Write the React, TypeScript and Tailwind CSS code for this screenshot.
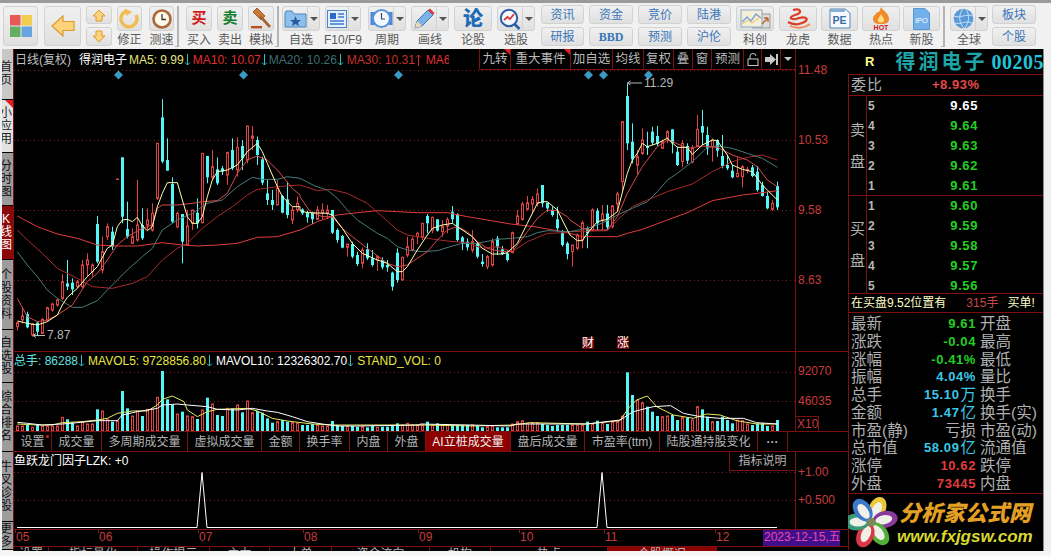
import type { ReactNode } from "react";

const RED = "#e04444";
const CYAN = "#54f6f6";

// wick top, body top, body bottom, wick bottom (3x crop y), 1 = up candle
const candles: number[][] = [
  [785, 788, 800, 812, 1], [740, 768, 780, 790, 1], [755, 762, 802, 805, 0], [790, 792, 825, 830, 1], [785, 788, 815, 825, 0],
  [775, 778, 820, 822, 1], [740, 743, 780, 785, 1], [728, 732, 750, 755, 1], [715, 720, 735, 740, 1], [642, 665, 715, 720, 1],
  [600, 670, 680, 690, 0], [655, 668, 688, 705, 0], [660, 665, 680, 685, 1], [600, 615, 680, 685, 1], [580, 600, 615, 650, 1],
  [610, 615, 635, 650, 1], [468, 492, 605, 610, 0], [530, 575, 630, 640, 1], [490, 500, 530, 540, 1], [500, 515, 560, 570, 0],
  [357, 357, 358, 358, 1], [292, 292, 470, 490, 0], [425, 507, 530, 535, 0], [505, 530, 550, 552, 1], [360, 495, 540, 545, 1],
  [445, 495, 535, 540, 0], [445, 480, 495, 510, 1], [430, 460, 510, 515, 1], [250, 250, 415, 420, 1], [118, 172, 305, 310, 0],
  [235, 300, 332, 332, 0], [352, 372, 485, 490, 0], [455, 460, 500, 505, 1], [462, 462, 545, 610, 0], [450, 498, 555, 555, 1],
  [450, 450, 490, 510, 1], [415, 458, 490, 505, 0], [280, 280, 488, 490, 1], [288, 288, 352, 370, 0], [270, 320, 352, 360, 1],
  [292, 328, 370, 375, 0], [318, 325, 335, 345, 0], [275, 278, 345, 375, 1], [235, 270, 325, 330, 0], [232, 262, 330, 350, 1],
  [240, 258, 295, 330, 0], [198, 198, 300, 310, 1], [198, 228, 235, 270, 1], [230, 240, 285, 315, 0], [290, 298, 368, 375, 0],
  [360, 400, 420, 435, 0], [390, 420, 435, 450, 0], [360, 385, 435, 435, 1], [405, 408, 458, 460, 0], [365, 418, 465, 475, 0],
  [440, 450, 480, 492, 1], [410, 430, 450, 458, 1],
  [445, 448, 460, 465, 0], [452, 458, 472, 488, 0], [455, 458, 478, 492, 0], [438, 450, 478, 480, 1], [430, 450, 458, 478, 1],
  [435, 450, 458, 478, 1], [450, 450, 518, 522, 0], [505, 510, 540, 548, 0], [525, 528, 563, 565, 0], [552, 552, 562, 590, 1],
  [545, 552, 590, 595, 0], [575, 585, 612, 618, 0], [562, 570, 610, 625, 1], [550, 568, 595, 600, 0], [570, 595, 615, 620, 0],
  [585, 590, 600, 632, 1], [592, 600, 622, 628, 0], [600, 615, 622, 635, 0], [635, 638, 680, 692, 0], [565, 578, 660, 668, 0],
  [590, 592, 660, 662, 1], [530, 560, 585, 592, 1], [530, 538, 570, 575, 1], [515, 520, 530, 552, 1], [490, 490, 530, 540, 1],
  [462, 468, 490, 520, 0], [470, 472, 510, 520, 1], [478, 478, 512, 515, 0], [480, 500, 515, 530, 1], [472, 478, 498, 520, 1],
  [438, 455, 478, 490, 0], [460, 462, 540, 545, 0], [528, 532, 552, 570, 0], [535, 545, 562, 572, 0], [510, 545, 570, 578, 1],
  [545, 550, 590, 595, 0], [582, 605, 612, 620, 0], [585, 590, 620, 628, 1], [535, 545, 615, 620, 1], [528, 535, 562, 585, 0],
  [558, 568, 582, 585, 0], [570, 580, 600, 605, 0], [515, 518, 578, 580, 1], [450, 468, 492, 495, 1], [425, 432, 478, 482, 1],
  [408, 428, 448, 452, 1], [408, 418, 432, 458, 1], [385, 402, 430, 440, 1], [375, 375, 430, 442, 0], [428, 428, 445, 455, 0],
  [440, 450, 465, 470, 0], [440, 478, 505, 515, 0], [510, 518, 555, 560, 0], [545, 550, 582, 598, 0],
  [555, 555, 575, 620, 1], [520, 525, 565, 570, 1], [482, 488, 540, 565, 1], [500, 505, 520, 565, 0], [445, 450, 510, 512, 1],
  [445, 452, 490, 510, 0], [435, 462, 480, 510, 1], [435, 460, 502, 510, 0], [435, 438, 500, 505, 1], [395, 402, 432, 455, 1],
  [185, 185, 365, 395, 1], [70, 108, 250, 270, 0], [190, 245, 298, 310, 0], [270, 290, 315, 342, 1], [205, 240, 280, 285, 1],
  [215, 258, 264, 285, 0], [200, 215, 248, 255, 0], [198, 228, 252, 258, 0], [238, 245, 265, 265, 1], [210, 215, 235, 250, 1],
  [208, 208, 250, 280, 0], [260, 275, 315, 318, 0], [240, 250, 305, 322, 1], [250, 258, 302, 312, 0], [255, 265, 305, 310, 1],
  [165, 208, 258, 262, 1], [150, 198, 218, 255, 0], [200, 225, 265, 285, 0], [235, 240, 260, 305, 1], [238, 240, 272, 290, 0],
  [225, 288, 318, 325, 0], [285, 315, 325, 330, 0], [315, 332, 352, 355, 0], [292, 340, 350, 352, 1], [315, 320, 350, 382, 1],
  [320, 328, 332, 340, 1], [315, 322, 348, 352, 0], [318, 335, 390, 395, 0], [365, 375, 408, 410, 0], [395, 408, 445, 448, 0],
  [420, 430, 448, 452, 1], [365, 378, 442, 450, 0],
];

const volumes = [
  228, 228, 225, 232, 225, 228, 228, 228, 228, 202, 208, 218, 228, 215, 222, 222, 178, 183, 208, 215, 212, 123, 175, 198, 183, 198, 178, 178, 142, 63,
  148, 165, 192, 185, 198, 200, 207, 180, 143, 162, 195, 198, 175, 175, 165, 187, 153, 188, 183, 188, 205, 218, 215, 210, 215, 218, 220,
  225, 225, 222, 225, 228, 228, 213, 225, 228, 228, 228, 230, 230, 232, 228, 232, 230, 230, 228, 220, 225, 220, 225, 225,
  225, 215, 225, 220, 225, 225, 225, 225, 225, 225, 225, 228, 232, 230, 228, 232, 232, 232, 222, 215, 212, 220, 218, 218, 222, 225, 228, 225, 225, 225,
  225, 225, 225, 215, 222, 212, 218, 222, 215, 215, 198, 67, 135, 150, 158, 170, 185, 198, 200, 198, 195, 210, 203, 203, 210, 170, 178, 200, 215, 213,
  200, 210, 220, 210, 212, 222, 225, 220, 220, 228, 228, 210,
];

const points = (flat: number[], x0: number, y0: number) => {
  const out: string[] = [];
  for (let i = 0; i < flat.length; i += 2) out.push(`${x0 + flat[i] / 3},${y0 + flat[i + 1] / 3}`);
  return out.join(" ");
};

// each line is traced from three 3x crops, at x offsets 0, 300 and 570
const maLine = (a: number[], b: number[], c: number[]) =>
  [points(a, 0, 60), points(b, 300, 60), points(c, 570, 60)].join(" ");

const maLines = [
  {
    color: "#e23c3c",
    pts: maLine(
      [52, 468, 112, 500, 172, 522, 232, 535, 292, 555, 352, 558, 412, 558, 487, 548, 547, 555, 592, 558, 652, 555, 712, 550, 772, 532, 832, 530, 900, 510],
      [0, 510, 52, 485, 112, 465, 172, 458, 232, 452, 292, 455, 352, 458, 442, 458, 502, 470, 562, 480, 632, 492, 702, 500, 772, 512, 802, 518],
      [0, 520, 37, 530, 142, 530, 172, 520, 217, 508, 292, 480, 352, 458, 427, 422, 517, 405, 562, 400, 622, 392],
    ),
  },
  {
    color: "#a82a2a",
    pts: maLine(
      [52, 510, 82, 540, 127, 580, 172, 625, 232, 655, 277, 680, 337, 685, 397, 670, 442, 650, 487, 600, 532, 565, 562, 550, 607, 505, 652, 470, 697, 440, 742, 405, 772, 388, 832, 380, 900, 375],
      [0, 375, 52, 392, 92, 388, 142, 400, 202, 430, 247, 470, 292, 510, 322, 525, 382, 535, 442, 543, 502, 548, 547, 565, 592, 560, 637, 575, 682, 545, 742, 520, 802, 518],
      [0, 515, 112, 512, 142, 480, 187, 440, 232, 420, 292, 395, 367, 372, 427, 335, 487, 305, 532, 292, 577, 285, 622, 300],
    ),
  },
  {
    color: "#4a7a7a",
    pts: maLine(
      [52, 575, 82, 615, 112, 650, 142, 690, 172, 715, 217, 742, 247, 742, 292, 722, 322, 690, 382, 630, 427, 590, 457, 565, 487, 510, 532, 480, 577, 460, 622, 430, 667, 420, 712, 380, 757, 352, 787, 358, 832, 358, 862, 350, 900, 355],
      [0, 355, 45, 378, 82, 390, 112, 415, 142, 450, 172, 480, 232, 520, 262, 535, 292, 560, 322, 570, 367, 575, 412, 572, 457, 558, 487, 550, 532, 550, 592, 538, 637, 535, 682, 530, 712, 518, 742, 512, 802, 515],
      [0, 515, 52, 505, 82, 495, 112, 482, 142, 465, 187, 445, 232, 425, 262, 395, 292, 360, 322, 340, 367, 305, 412, 262, 442, 258, 487, 265, 532, 280, 577, 295, 622, 322],
    ),
  },
  {
    color: "#d84a4a",
    pts: maLine(
      [52, 715, 82, 770, 112, 785, 142, 780, 172, 765, 217, 735, 262, 665, 292, 640, 322, 600, 352, 555, 382, 530, 427, 505, 457, 495, 472, 445, 487, 435, 532, 435, 577, 430, 607, 425, 652, 422, 682, 400, 712, 340, 742, 300, 772, 288, 802, 300, 832, 330, 877, 385, 900, 405],
      [0, 410, 30, 455, 67, 470, 97, 470, 127, 505, 157, 530, 202, 565, 262, 610, 292, 620, 322, 615, 352, 595, 382, 575, 412, 540, 442, 510, 472, 500, 502, 515, 532, 545, 562, 565, 607, 575, 637, 575, 652, 555, 682, 515, 712, 475, 742, 450, 772, 452, 802, 470],
      [0, 480, 37, 505, 67, 510, 112, 510, 142, 470, 172, 400, 217, 320, 262, 260, 292, 240, 307, 245, 352, 265, 397, 258, 442, 262, 487, 285, 532, 300, 562, 320, 592, 360, 622, 380],
    ),
  },
  {
    color: "#ffffb0",
    pts: maLine(
      [52, 783, 82, 790, 112, 795, 142, 785, 172, 765, 187, 735, 202, 712, 232, 685, 262, 650, 292, 620, 322, 565, 337, 555, 352, 500, 367, 480, 382, 478, 397, 485, 412, 472, 427, 498, 442, 512, 457, 500, 472, 440, 487, 400, 502, 368, 532, 368, 547, 420, 562, 470, 577, 490, 592, 490, 607, 470, 622, 410, 637, 360, 652, 335, 682, 330, 712, 315, 742, 275, 772, 250, 787, 275, 802, 310, 832, 380, 847, 410, 877, 440, 900, 440],
      [0, 452, 22, 458, 82, 460, 97, 465, 127, 505, 157, 550, 187, 580, 232, 600, 262, 610, 292, 635, 307, 635, 322, 620, 352, 570, 382, 525, 397, 505, 427, 495, 457, 490, 487, 510, 517, 530, 547, 565, 577, 582, 607, 582, 622, 578, 652, 550, 682, 490, 712, 430, 727, 425, 742, 425, 772, 450, 802, 510],
      [0, 525, 22, 542, 37, 542, 52, 520, 82, 485, 112, 478, 142, 455, 172, 340, 187, 300, 202, 280, 217, 250, 232, 260, 262, 250, 292, 235, 322, 262, 352, 262, 367, 283, 397, 255, 427, 240, 442, 242, 472, 285, 487, 315, 517, 328, 547, 335, 577, 375, 607, 405, 622, 420],
    ),
  },
];

const volWhite =
  points([52, 217, 82, 220, 127, 225, 187, 222, 232, 218, 292, 212, 352, 212, 367, 195, 412, 185, 472, 175, 487, 165, 532, 162, 562, 165, 622, 170, 652, 178, 712, 180, 757, 175, 802, 183, 832, 187, 877, 200, 922, 215, 967, 222, 1012, 228, 1072, 228, 1260, 225], 0, 350) +
  " " +
  points([0, 222, 150, 225, 270, 228, 290, 222, 500, 222, 600, 210, 640, 185, 700, 170, 752, 167, 790, 190, 840, 200, 900, 205, 970, 205, 1010, 218, 1072, 222], 420, 350);

const volYellow =
  points([52, 222, 112, 225, 157, 225, 187, 218, 247, 215, 292, 210, 322, 205, 352, 190, 397, 183, 442, 183, 472, 165, 487, 148, 517, 138, 552, 155, 562, 180, 592, 200, 622, 185, 652, 178, 742, 175, 772, 183, 817, 205, 862, 213, 937, 222, 1000, 225, 1260, 225], 0, 350) +
  " " +
  points([0, 225, 160, 228, 280, 225, 330, 218, 500, 222, 600, 212, 625, 175, 650, 150, 682, 138, 710, 170, 760, 195, 820, 205, 860, 192, 900, 195, 950, 212, 1010, 222, 1072, 222], 420, 350);

const leftTabs = [
  { label: "首页", cls: "h-[51px] bg-[#c8c8c8] text-[#222]" },
  { label: "小应用", cls: "h-[53px] bg-[#e2e2e2] text-[#222]", corner: true },
  { label: "分时图", cls: "h-[53px] bg-[#9c9c9c] text-[#111]" },
  { label: "K线图", cls: "h-[54px] bg-[#8c0808] text-white" },
  { label: "个股资料", cls: "h-[70px] bg-[#9c9c9c] text-[#111]" },
  { label: "自选股", cls: "h-[53px] bg-[#9c9c9c] text-[#111]" },
  { label: "综合排名", cls: "h-[69px] bg-[#9c9c9c] text-[#111]" },
  { label: "牛叉诊股", cls: "h-[70px] bg-[#9c9c9c] text-[#111]" },
  { label: "更多", cls: "h-[28px] bg-[#9c9c9c] text-[#111]" },
];

const volTabs = [
  { label: "成交量", cls: "w-[50px]" },
  { label: "多周期成交量", cls: "w-[86px]" },
  { label: "虚拟成交量", cls: "w-[74px]" },
  { label: "金额", cls: "w-[38px]" },
  { label: "换手率", cls: "w-[50px]" },
  { label: "内盘", cls: "w-[38px]" },
  { label: "外盘", cls: "w-[38px]" },
  { label: "AI立桩成交量", cls: "w-[85px] bg-[#8c0000] text-[#eee]" },
  { label: "盘后成交量", cls: "w-[74px]" },
  { label: "市盈率(ttm)", cls: "w-[75px]" },
  { label: "陆股通持股变化", cls: "w-[98px]" },
  { label: "···", cls: "w-[30px] font-bold" },
];

const chartTabs = [
  { label: "九转", cls: "w-[31px]", corner: true },
  { label: "重大事件", cls: "w-[60px]", corner: true },
  { label: "加自选", cls: "w-[42px]" },
  { label: "均线", cls: "w-[31px]" },
  { label: "复权", cls: "w-[30px]" },
  { label: "叠", cls: "w-[19px]" },
  { label: "窗", cls: "w-[19px]" },
  { label: "预测", cls: "w-[32px]" },
];

const dateLabels = [
  { label: "05", cls: "w-[83px]" },
  { label: "06", cls: "w-[100px]" },
  { label: "07", cls: "w-[105px]" },
  { label: "08", cls: "w-[115px]" },
  { label: "09", cls: "w-[101px]" },
  { label: "10", cls: "w-[85px]" },
  { label: "11", cls: "w-[111px]" },
  { label: "12", cls: "w-[48px]" },
];

const bottomTabs = [
  { label: "设置", cls: "w-[35px]" },
  { label: "指标量化", cls: "w-[89px]" },
  { label: "操作提示", cls: "w-[72px]" },
  { label: "主力", cls: "w-[60px]" },
  { label: "大单", cls: "w-[62px]" },
  { label: "资金流向", cls: "w-[98px]" },
  { label: "机构", cls: "w-[61px]" },
  { label: "热点", cls: "w-[117px]" },
  { label: "个股概况", cls: "w-[109px] bg-[#8c0000]" },
];

const stats: { left: string; value?: string; unit?: string; color: string; right: string }[] = [
  { left: "最新", value: "9.61", color: "text-[#22d022]", right: "开盘" },
  { left: "涨跌", value: "-0.04", color: "text-[#22d022]", right: "最高" },
  { left: "涨幅", value: "-0.41%", color: "text-[#22d022]", right: "最低" },
  { left: "振幅", value: "4.04%", color: "text-[#3cc8e8]", right: "量比" },
  { left: "总手", value: "15.10", unit: "万", color: "text-[#3cc8e8]", right: "换手" },
  { left: "金额", value: "1.47", unit: "亿", color: "text-[#3cc8e8]", right: "换手(实)" },
  { left: "市盈(静)", unit: "亏损", color: "text-[#b0b0b0]", right: "市盈(动)" },
  { left: "总市值", value: "58.09", unit: "亿", color: "text-[#3cc8e8]", right: "流通值" },
  { left: "涨停", value: "10.62", color: "text-[#e03c3c]", right: "跌停" },
  { left: "外盘", value: "73445", color: "text-[#e03c3c]", right: "内盘" },
];

function IconBox({ className, children }: { className: string; children: ReactNode }) {
  return (
    <div className={`flex items-center justify-center rounded-[3px] border border-[#d2d2d2] bg-gradient-to-b from-[#f0f0f0] to-[#e0e0e0] ${className}`}>
      {children}
    </div>
  );
}

function ToolButton({ className, label, caret, children }: { className: string; label: string; caret?: boolean; children: ReactNode }) {
  return (
    <div className={`flex flex-col items-center ${className}`}>
      <div className="flex h-[25px] w-full rounded-[3px] border border-[#d2d2d2] bg-gradient-to-b from-[#f0f0f0] to-[#e0e0e0]">
        <div className="flex flex-1 items-center justify-center">{children}</div>
        {caret ? (
          <div className="flex w-[12px] items-center justify-center border-l border-[#d2d2d2]">
            <div className="h-0 w-0 border-x-[4px] border-t-[4px] border-x-transparent border-t-[#555]" />
          </div>
        ) : null}
      </div>
      <div className="mt-[1px] whitespace-nowrap text-[12px] leading-[17px] text-[#5a5a5a]">{label}</div>
    </div>
  );
}

function SmallPair({ className, top, bottom }: { className: string; top: ReactNode; bottom: ReactNode }) {
  return (
    <div className={`-mt-px flex flex-col gap-[3px] text-[12px] text-[#3a76b8] ${className}`}>
      <IconBox className="h-[19px] w-full">{top}</IconBox>
      <IconBox className="h-[19px] w-full">{bottom}</IconBox>
    </div>
  );
}

function Sep({ className }: { className: string }) {
  return <div className={`h-[41px] w-[4px] border-r-2 border-b border-[#b4b4b4] ${className}`} />;
}

function Toolbar() {
  return (
    <div className="flex h-[49px] items-start border-t-[3px] border-[#9a9a9a] bg-[#f1f1f1] pt-[3px]">
      <IconBox className="ml-[3px] h-[40px] w-[35px]">
        <svg width="22" height="22" viewBox="0 0 22 22">
          <rect width="10.5" height="10.5" fill="#e85858" />
          <rect x="11.5" width="10.5" height="10.5" fill="#f0cc50" />
          <rect y="11.5" width="10.5" height="10.5" fill="#64ae64" />
          <rect x="11.5" y="11.5" width="10.5" height="10.5" fill="#68a4e0" />
        </svg>
      </IconBox>
      <IconBox className="ml-[6px] h-[40px] w-[37px]">
        <svg width="24" height="22" viewBox="0 0 24 22">
          <path d="M1 11 L12 1 V6.5 H23 V15.5 H12 V21 Z" fill="#fcd27a" stroke="#dc9a2c" strokeWidth="1.2" />
        </svg>
      </IconBox>
      <div className="ml-[5px] flex w-[26px] flex-col gap-[3px]">
        <IconBox className="h-[18px] w-full">
          <svg width="14" height="13" viewBox="0 0 14 13">
            <path d="M7 1 L13 7 H10 V12 H4 V7 H1 Z" fill="#fcd27a" stroke="#dc9a2c" />
          </svg>
        </IconBox>
        <IconBox className="h-[19px] w-full">
          <svg width="14" height="13" viewBox="0 0 14 13">
            <path d="M7 12 L13 6 H10 V1 H4 V6 H1 Z" fill="#fcd27a" stroke="#dc9a2c" />
          </svg>
        </IconBox>
      </div>
      <ToolButton className="ml-[5px] w-[25px]" label="修正">
        <svg width="21" height="21" viewBox="0 0 21 21">
          <path d="M8 3 A8 8 0 1 0 17 7" fill="none" stroke="#f2bc50" strokeWidth="3.4" />
          <path d="M6 0.5 L13 4 L7 8 Z" fill="#f2bc50" />
        </svg>
      </ToolButton>
      <ToolButton className="ml-[7px] w-[25px]" label="测速">
        <svg width="20" height="20" viewBox="0 0 20 20">
          <circle cx="10" cy="10" r="8.5" fill="#fffbe8" stroke="#a8693a" strokeWidth="2.6" />
          <path d="M10 5 V10.5 H14" fill="none" stroke="#333" strokeWidth="1.3" />
        </svg>
      </ToolButton>
      <Sep className="ml-[1px]" />
      <ToolButton className="ml-[7px] w-[26px]" label="买入">
        <span className="text-[15px] font-bold text-[#d01818]">买</span>
      </ToolButton>
      <ToolButton className="ml-[5px] w-[26px]" label="卖出">
        <span className="text-[15px] font-bold text-[#0d7d2a]">卖</span>
      </ToolButton>
      <ToolButton className="ml-[5px] w-[26px]" label="模拟">
        <svg width="22" height="23" viewBox="0 0 22 23">
          <path d="M7 1 L15 9 L11 13 L3 5 Z" fill="#c87a3a" stroke="#8a4a1c" strokeWidth="0.8" />
          <path d="M11 8 L21 19 L19 21 L9 10 Z" fill="#a86430" />
          <rect x="1" y="19" width="11" height="2.4" fill="#b85020" />
        </svg>
      </ToolButton>
      <Sep className="ml-[1px]" />
      <ToolButton className="ml-[3px] w-[38px]" label="自选" caret>
        <svg width="23" height="20" viewBox="0 0 23 20">
          <path d="M1 4 V18 H22 V5 H10 L8 2 H2 Z" fill="#8ec0ec" stroke="#4a86c0" />
          <path d="M11.5 7 L13 11 L17 11 L14 13.5 L15 17 L11.5 15 L8 17 L9 13.5 L6 11 L10 11 Z" fill="#2a5aa0" />
        </svg>
      </ToolButton>
      <ToolButton className="ml-[5px] w-[36px]" label="F10/F9" caret>
        <svg width="20" height="18" viewBox="0 0 20 18">
          <rect x="0.5" y="0.5" width="19" height="17" fill="#e6f0fc" stroke="#4a86c8" />
          <rect x="3" y="3" width="6" height="6" fill="#2a6ac8" />
          <path d="M3 11 H17 M3 14 H17 M11 4 H17 M11 7 H17" stroke="#3a7ad0" strokeWidth="1.4" />
        </svg>
      </ToolButton>
      <ToolButton className="ml-[7px] w-[38px]" label="周期" caret>
        <svg width="23" height="21" viewBox="0 0 23 21">
          <rect x="0.5" y="4" width="4" height="13" fill="#4a86d8" />
          <rect x="18.5" y="4" width="4" height="13" fill="#4a86d8" />
          <circle cx="11.5" cy="10.5" r="8.5" fill="#f4f8ff" stroke="#5a94d8" strokeWidth="2" />
          <path d="M11.5 5 V11 H15" fill="none" stroke="#3a4a6a" strokeWidth="1.2" />
        </svg>
      </ToolButton>
      <ToolButton className="ml-[5px] w-[38px]" label="画线" caret>
        <svg width="21" height="21" viewBox="0 0 21 21">
          <path d="M1 20 L3 13 L14 2 L19 7 L8 18 Z" fill="#7cb2e8" stroke="#3c78b8" />
          <path d="M14 2 L16 0.5 L20.5 5 L19 7 Z" fill="#d83a3a" />
          <path d="M1 20 L3 13 L8 18 Z" fill="#f4dcb0" />
        </svg>
      </ToolButton>
      <ToolButton className="ml-[5px] w-[38px]" label="论股">
        <span className="text-[20px] font-black leading-none text-[#1f6ab4]">论</span>
      </ToolButton>
      <ToolButton className="ml-[5px] w-[38px]" label="选股" caret>
        <svg width="22" height="22" viewBox="0 0 22 22">
          <circle cx="10" cy="10" r="8.2" fill="#f4f8fc" stroke="#2a5ea8" strokeWidth="2" />
          <path d="M15.5 16 L20.5 21" stroke="#2a5ea8" strokeWidth="2.6" />
          <path d="M5 12 L8.5 9 L11 11 L15 6" fill="none" stroke="#d83a3a" strokeWidth="1.8" />
        </svg>
      </ToolButton>
      <SmallPair className="ml-[6px] w-[43px]" top="资讯" bottom="研报" />
      <SmallPair className="ml-[5px] w-[44px]" top="资金" bottom={<span className="font-['Liberation_Serif',serif] font-bold">BBD</span>} />
      <SmallPair className="ml-[5px] w-[44px]" top="竞价" bottom="预测" />
      <SmallPair className="ml-[5px] w-[44px]" top="陆港" bottom="沪伦" />
      <ToolButton className="ml-[5px] w-[38px]" label="科创">
        <svg width="31" height="20" viewBox="0 0 31 20">
          <rect x="13" y="5" width="17" height="14" fill="#dcdcdc" stroke="#999" />
          <rect x="1" y="1" width="21" height="17" fill="#f4f0d8" stroke="#8aa8c8" />
          <path d="M2 13 L7 8 L11 12 L16 5 L21 9" fill="none" stroke="#7aa4d8" strokeWidth="1.4" />
          <path d="M2 15 L8 11 L12 14 L20 8" fill="none" stroke="#e8b860" />
          <path d="M22 15 L28 9 M28 9 H24 M28 9 V13" fill="none" stroke="#b8662a" strokeWidth="1.4" />
        </svg>
      </ToolButton>
      <ToolButton className="ml-[5px] w-[38px]" label="龙虎">
        <svg width="26" height="22" viewBox="0 0 26 22">
          <path d="M8 2 C16 0 18 5 10 7 C3 9 5 13 14 10 C22 8 25 12 17 15 C12 17 8 17 3 14" fill="none" stroke="#dc3c24" strokeWidth="2.2" />
          <path d="M5 18 C12 21 20 20 25 16" fill="none" stroke="#ec8a5a" strokeWidth="1.8" />
        </svg>
      </ToolButton>
      <ToolButton className="ml-[4px] w-[37px]" label="数据">
        <svg width="22" height="21" viewBox="0 0 22 21">
          <path d="M1 1 H16 L21 5 V20 H1 Z" fill="#f6f9fd" stroke="#5a86b4" />
          <rect x="1" y="1" width="15" height="3" fill="#8aaed4" />
          <text x="3.5" y="15.5" fontSize="10.5" fontWeight="700" fill="#3a6ea8" fontFamily="Liberation Sans">PE</text>
        </svg>
      </ToolButton>
      <ToolButton className="ml-[4px] w-[38px]" label="热点">
        <svg width="22" height="23" viewBox="0 0 22 23">
          <path d="M11 0 C13 4 19 6 19 12 C19 15 17 17 11 17 C5 17 3 15 3 12 C3 8 6 8 7 5 C9 6 10 4 11 0 Z" fill="#f08a2a" />
          <path d="M11 7 C12 10 15 11 14 14 C13 16 9 16 8 14 C7 12 10 10 11 7 Z" fill="#ffe080" />
          <text x="11" y="22.5" textAnchor="middle" fontSize="7" fontWeight="700" fill="#d02020" fontFamily="Liberation Sans">HOT</text>
        </svg>
      </ToolButton>
      <ToolButton className="ml-[3px] w-[37px]" label="新股">
        <svg width="17" height="22" viewBox="0 0 17 22">
          <path d="M0.5 0.5 H12 L16.5 5 V21.5 H0.5 Z" fill="#72b0ec" stroke="#5a96d4" />
          <text x="8.5" y="14.5" textAnchor="middle" fontSize="7.5" fill="#fff" fontFamily="Liberation Sans">IPO</text>
        </svg>
      </ToolButton>
      <Sep className="ml-[1px]" />
      <ToolButton className="ml-[5px] w-[38px]" label="全球" caret>
        <svg width="21" height="21" viewBox="0 0 21 21">
          <circle cx="10.5" cy="10.5" r="9.8" fill="#5a9ad8" />
          <path d="M1 8 C6 11 14 5 20 8 M2 15 C7 17 14 12 19 15 M10 1 C5 7 6 15 11 20 M13 1 C17 7 16 15 12 20" fill="none" stroke="#cfe4f8" strokeWidth="0.9" />
        </svg>
      </ToolButton>
      <SmallPair className="ml-[4px] w-[44px]" top="板块" bottom="个股" />
    </div>
  );
}

function TrendArrow({ up, color }: { up?: boolean; color: string }) {
  return (
    <svg width="7" height="12" viewBox="0 0 7 12" className="inline-block align-[-2px]">
      <path d={up ? "M3.5 12 V1 M1 3.5 L3.5 1 L6 3.5" : "M3.5 0 V11 M1 8.5 L3.5 11 L6 8.5"} fill="none" stroke={color} />
    </svg>
  );
}

function DottedGrid({ ys }: { ys: number[] }) {
  return (
    <>
      {ys.map((y) => (
        <line key={y} x1="14" x2="795" y1={y + 0.5} y2={y + 0.5} stroke="#8a1c1c" strokeDasharray="1 3" />
      ))}
    </>
  );
}

function MainChart() {
  return (
    <svg width="781" height="281" viewBox="14 70 781 281" className="block">
      <DottedGrid ys={[70, 140, 210, 280]} />
      {[118.5, 243.5, 398.5, 588.5, 603.5, 648.5].map((x) => (
        <path key={x} d={`M${x} 70.5 L${x + 4.5} 75 L${x} 79.5 L${x - 4.5} 75 Z`} fill="#3a9ac4" />
      ))}
      {candles.map((c, i) => {
        const x = 17.5 + i * 5;
        const [wickTop, bodyTop, bodyBottom, wickBottom] = c.slice(0, 4).map((v) => 60 + v / 3);
        const up = c[4] === 1;
        return (
          <g key={i}>
            <line x1={x} x2={x} y1={wickTop} y2={wickBottom} stroke={up ? RED : CYAN} />
            {up ? (
              <rect x={x - 1} y={bodyTop} width="2" height={Math.max(bodyBottom - bodyTop, 0.5)} fill="#000" stroke={RED} />
            ) : (
              <rect x={x - 1.5} y={bodyTop} width="3" height={bodyBottom - bodyTop} fill={CYAN} />
            )}
          </g>
        );
      })}
      {maLines.map((m) => (
        <polyline key={m.color} points={m.pts} fill="none" stroke={m.color} strokeWidth="1" />
      ))}
      <path d="M627.5 83 H642 M627.5 83 L630.5 81 M627.5 83 L630.5 85" fill="none" stroke="#b8b8b8" />
      <path d="M33 335.5 H45 M33 335.5 L36 333.5 M33 335.5 L36 337.5" fill="none" stroke="#b8b8b8" />
    </svg>
  );
}

function VolumeChart() {
  return (
    <svg width="781" height="79" viewBox="14 352 781 79" className="block">
      <DottedGrid ys={[372, 401]} />
      {volumes.map((v, i) => {
        const x = 17.5 + i * 5;
        const top = 350 + v / 3;
        return candles[i][4] === 1 ? (
          <rect key={i} x={x - 1} y={top} width="2" height={431 - top} fill="#000" stroke={RED} />
        ) : (
          <rect key={i} x={x - 1.5} y={top} width="3" height={431 - top} fill={CYAN} />
        );
      })}
      <polyline points={volYellow} fill="none" stroke="#e8e860" />
      <polyline points={volWhite} fill="none" stroke="#fff" />
    </svg>
  );
}

function FactorChart() {
  return (
    <svg width="781" height="77" viewBox="14 452 781 77" className="block">
      <DottedGrid ys={[472, 500]} />
      <polyline points="17,527.5 197,527.5 202,472.5 207,527.5 597,527.5 602,472.5 607,527.5 777,527.5" fill="none" stroke="#fff" />
    </svg>
  );
}

function CenterColumn() {
  return (
    <div className="w-[835px] border-l border-[#7c1010] text-[12px]">
      <div className="flex h-[303px] border-b border-[#7c1010]">
        <div className="relative w-[781px]">
          <div className="flex h-[21px] items-center">
            <div className="flex w-[435px] items-center overflow-hidden whitespace-nowrap pl-[1px]">
              <span className="text-[#c0c0c0]">日线(复权)</span>
              <span className="ml-[8px] text-white">得润电子</span>
              <span className="ml-[2px] text-[#e4e480]">MA5: 9.99</span>
              <span className="mr-[2px]"><TrendArrow color="#30c0c0" /></span>
              <span className="text-[#e03030]">MA10: 10.07</span>
              <span className="mr-[1px]"><TrendArrow color="#30c0c0" /></span>
              <span className="text-[#3e6e74]">MA20: 10.26</span>
              <span className="mr-[3px]"><TrendArrow color="#30c0c0" /></span>
              <span className="text-[#c83030]">MA30: 10.31</span>
              <span className="mr-[4px]"><TrendArrow up color="#c83030" /></span>
              <span className="text-[#e03030]">MA60: 9.80</span>
            </div>
            <div className="ml-[30px] flex h-[21px] border-b border-l border-[#7c1010] text-[12.5px] text-[#b8b8b8]">
              {chartTabs.map((t) => (
                <div key={t.label} className={`relative flex items-center justify-center border-r border-[#7c1010] ${t.cls}`}>
                  {t.label}
                  {t.corner ? <div className="absolute right-0 top-0 h-0 w-0 border-l-[6px] border-t-[6px] border-l-transparent border-t-[#e02020]" /> : null}
                </div>
              ))}
              <div className="flex w-[18px] items-center justify-center border-r border-[#7c1010]">
                <svg width="12" height="13" viewBox="0 0 12 13">
                  <rect x="1" y="6" width="10" height="6.5" fill="none" stroke="#c8c8c8" />
                  <path d="M3 6 V3 A3 2.5 0 0 1 9 3" fill="none" stroke="#c8c8c8" />
                </svg>
              </div>
              <div className="flex w-[19px] items-center justify-center border-r border-[#7c1010]">
                <svg width="13" height="11" viewBox="0 0 13 11">
                  <path d="M0 3 H5 V0 L11 5.5 L5 11 V8 H0 Z" fill="#c8c8c8" />
                  <rect x="11" y="0" width="2" height="11" fill="#c8c8c8" />
                </svg>
              </div>
              <div className="flex w-[14px] items-center justify-center">
                <div className="h-0 w-0 border-x-[4px] border-t-[4px] border-x-transparent border-t-[#c8c8c8]" />
              </div>
            </div>
          </div>
          <MainChart />
          <span className="absolute left-[33px] top-[278px] leading-[16px] text-[#b8b8b8]">7.87</span>
          <span className="absolute left-[630px] top-[26px] leading-[16px] text-[#b8b8b8]">11.29</span>
          <span className="absolute left-[568px] top-[288px] flex h-[12px] w-[12px] items-center justify-center bg-[#6c0808] text-[12px] text-white">财</span>
          <span className="absolute left-[603px] top-[288px] flex h-[12px] w-[12px] items-center justify-center bg-[#6c0808] text-[12px] text-white">涨</span>
        </div>
        <div className="flex w-[53px] flex-col gap-[54px] border-l border-[#7c1010] pl-[2px] pt-[13px] leading-[16px] text-[#c83c3c]">
          <span>11.48</span>
          <span>10.53</span>
          <span>9.58</span>
          <span>8.63</span>
        </div>
      </div>

      <div className="flex h-[80px] border-b border-[#7c1010]">
        <div className="relative w-[781px]">
          <VolumeChart />
          <div className="absolute left-0 top-[1px] whitespace-nowrap leading-[16px]">
            <span className="text-[#60e0e0]">总手: 86288</span>
            <TrendArrow color="#30c0c0" />
            <span className="ml-[3px] text-[#e8e840]">MAVOL5: 9728856.80</span>
            <TrendArrow color="#30c0c0" />
            <span className="ml-[3px] text-white">MAVOL10: 12326302.70</span>
            <TrendArrow color="#30c0c0" />
            <span className="ml-[3px] text-[#e8e840]">STAND_VOL: 0</span>
          </div>
        </div>
        <div className="w-[53px] border-l border-[#7c1010] leading-[16px] text-[#c83c3c]">
          <div className="flex flex-col gap-[14px] pl-[2px] pt-[11px]">
            <span>92070</span>
            <span>46035</span>
          </div>
          <div className="mt-[7px] h-[15px] w-[23px] overflow-hidden border-r border-t border-[#7c1010] pl-[1px] leading-[14px]">X10</div>
        </div>
      </div>

      <div className="flex h-[20px] border-b border-[#7c1010] text-[#b4b4b4]">
        <div className="relative flex w-[38px] items-center justify-center border-r border-[#7c1010]">
          设置
          <div className="absolute right-[2px] top-[3px] h-[3px] w-[3px] rounded-full bg-[#e02020]" />
        </div>
        {volTabs.map((t) => (
          <div key={t.label} className={`flex items-center justify-center whitespace-nowrap border-r border-[#7c1010] ${t.cls}`}>
            {t.label}
          </div>
        ))}
      </div>

      <div className="flex h-[78px] border-b border-[#7c1010]">
        <div className="relative w-[781px]">
          <FactorChart />
          <div className="absolute left-0 top-[1px] leading-[16px] text-white">鱼跃龙门因子LZK: +0</div>
          <div className="absolute right-0 top-0 flex h-[19px] w-[66px] items-center justify-center border-b border-l border-[#7c1010] text-[#b4b4b4]">指标说明</div>
        </div>
        <div className="flex w-[53px] flex-col gap-[12px] border-l border-[#7c1010] pl-[2px] pt-[12px] leading-[16px] text-[#c83c3c]">
          <span>+1.00</span>
          <span>+0.500</span>
        </div>
      </div>

      <div className="flex h-[17px] border-b border-[#7c1010] leading-[15px] text-[#c83c3c]">
        <div className="w-[1px]" />
        {dateLabels.map((d) => (
          <div key={d.label} className={`relative pl-[1px] ${d.cls}`}>
            <div className="absolute left-0 top-0 h-[3px] w-px bg-[#8a1c1c]" />
            {d.label}
          </div>
        ))}
        <div className="w-[77px] overflow-hidden whitespace-nowrap bg-[#40108c] pl-[1px] text-[#e84aa8]">2023-12-15,五</div>
      </div>

      <div className="flex h-[4px] overflow-hidden leading-[15px] text-[#b4b4b4]">
        {bottomTabs.map((t) => (
          <div key={t.label} className={`flex shrink-0 justify-center whitespace-nowrap border-r border-[#7c1010] ${t.cls}`}>
            {t.label}
          </div>
        ))}
      </div>
    </div>
  );
}

function QuoteRow({ n, price, color }: { n: number; price: string; color: string }) {
  return (
    <div className="flex h-[20px] w-[111px] items-center justify-between pl-[1px]">
      <span className="text-[12px] font-bold text-[#b8b8b8]">{n}</span>
      <span className={`text-[13px] font-bold tracking-[0.6px] ${color}`}>{price}</span>
    </div>
  );
}

function SideLabel({ chars, gap }: { chars: string[]; gap: string }) {
  return (
    <div className={`flex w-[18px] flex-col items-center justify-center border-r border-[#7c1010] text-[15px] leading-[17px] text-[#b0b0b0] ${gap}`}>
      {chars.map((c) => (
        <span key={c}>{c}</span>
      ))}
    </div>
  );
}

function Flower() {
  const petals = [
    { a: 25, c: "#e8c838" },
    { a: 80, c: "#8a3a9a" },
    { a: 145, c: "#52b038" },
    { a: 203, c: "#d83848" },
    { a: 270, c: "#3a9a78" },
    { a: 325, c: "#3a7ac8" },
  ];
  return (
    <svg width="56" height="56" viewBox="-28 -28 56 56" className="absolute -left-[6px] top-0">
      {petals.map((p) => (
        <g key={p.a} transform={`rotate(${p.a})`}>
          <ellipse cx="0" cy="-14.5" rx="8.5" ry="12.5" fill={p.c} />
          <ellipse cx="0" cy="-13" rx="4.5" ry="8.5" fill="#f0f0e8" />
        </g>
      ))}
      <circle r="4" fill="#7a8a58" />
    </svg>
  );
}

function RightPanel() {
  return (
    <div className="w-[195px] overflow-hidden bg-black">
      <div className="flex h-[25px] items-center whitespace-nowrap">
        <span className="ml-[17px] text-[13px] font-bold text-[#ffff90]">R</span>
        <span className="ml-[21px] text-[20px] font-bold leading-none tracking-[3px] text-[#1fa4a8]">得润电子</span>
        <span className="ml-[4px] font-['Liberation_Serif',serif] text-[20px] font-bold tracking-[0.5px] text-[#22c4dc]">002055</span>
      </div>
      <div className="relative h-[476px] w-[195px] border-l border-[#7c1010]">
        <div className="flex h-[22px] items-center border-y border-[#7c1010] text-[15px]">
          <span className="ml-[2px] tracking-[1px] text-[#b0b0b0]">委比</span>
          <span className="ml-[49px] text-[13px] font-bold tracking-[0.5px] text-[#e44848]">+8.93%</span>
        </div>
        <div className="flex h-[100px] border-b border-[#7c1010]">
          <SideLabel chars={["卖", "盘"]} gap="gap-[15px]" />
          <div>
            {["9.65", "9.64", "9.63", "9.62", "9.61"].map((p, i) => (
              <QuoteRow key={p} n={5 - i} price={p} color={i === 0 ? "text-white" : "text-[#22d022]"} />
            ))}
          </div>
        </div>
        <div className="flex h-[98px] border-b border-[#7c1010]">
          <SideLabel chars={["买", "盘"]} gap="gap-[15px]" />
          <div>
            {["9.60", "9.59", "9.58", "9.57", "9.56"].map((p, i) => (
              <QuoteRow key={p} n={i + 1} price={p} color="text-[#22d022]" />
            ))}
          </div>
        </div>
        <div className="flex h-[19px] items-center whitespace-nowrap border-b border-[#7c1010] pl-[2px] text-[12px] text-[#ffffc8]">
          <span>在买盘9.52位置有</span>
          <span className="ml-[20px] text-[#c84848]">315手</span>
          <span className="ml-[9px]">买单!</span>
        </div>
        <div className="h-[181px] border-b border-[#7c1010] pt-[2px]">
          {stats.map((s) => (
            <div key={s.left} className="flex h-[17.8px] items-center whitespace-nowrap text-[15.5px] leading-[18px] text-[#b0b0b0]">
              <div className="ml-[2px] flex w-[125px] items-center justify-between">
                <span>{s.left}</span>
                <span className={`flex items-center ${s.color}`}>
                  {s.value ? <span className="text-[13px] font-bold tracking-[0.6px]">{s.value}</span> : null}
                  {s.unit ? <span className="ml-[1px]">{s.unit}</span> : null}
                </span>
              </div>
              <span className="ml-[4px]">{s.right}</span>
            </div>
          ))}
        </div>
        <div className="relative h-[55px] whitespace-nowrap">
          <Flower />
          <div className="pl-[50px] pt-[8px] text-[22px] font-black italic leading-[24px] text-[#e4a024]">分析家公式网</div>
          <div className="pl-[48px] pt-[1px] text-[17px] font-bold italic leading-[20px] text-[#d8d830]">www.fxjgsw.com</div>
        </div>
      </div>
    </div>
  );
}

export default function App() {
  return (
    <div className="h-[556px] w-[1051px] overflow-hidden bg-[#f6f6f6] font-['Liberation_Sans','Noto_Sans_CJK_SC',sans-serif]">
      <Toolbar />
      <div className="flex h-[502px] bg-black">
        <div className="w-[13px] bg-[#f0f0f0] pl-[2px]">
          {leftTabs.map((t) => (
            <div key={t.label} className={`relative flex w-[11px] flex-col items-center justify-center overflow-hidden border-b border-black text-[12px] leading-[13px] ${t.cls}`}>
              {t.corner ? <div className="absolute right-0 top-0 h-0 w-0 border-l-[8px] border-t-[8px] border-l-transparent border-t-[#e02020]" /> : null}
              {[...t.label].map((c, i) => (
                <span key={i} className="-ml-[3px] block">{c}</span>
              ))}
            </div>
          ))}
        </div>
        <CenterColumn />
        <RightPanel />
        <div className="flex-1 border-l border-[#8a8a8a] bg-[#f0f0f0]" />
      </div>
    </div>
  );
}
